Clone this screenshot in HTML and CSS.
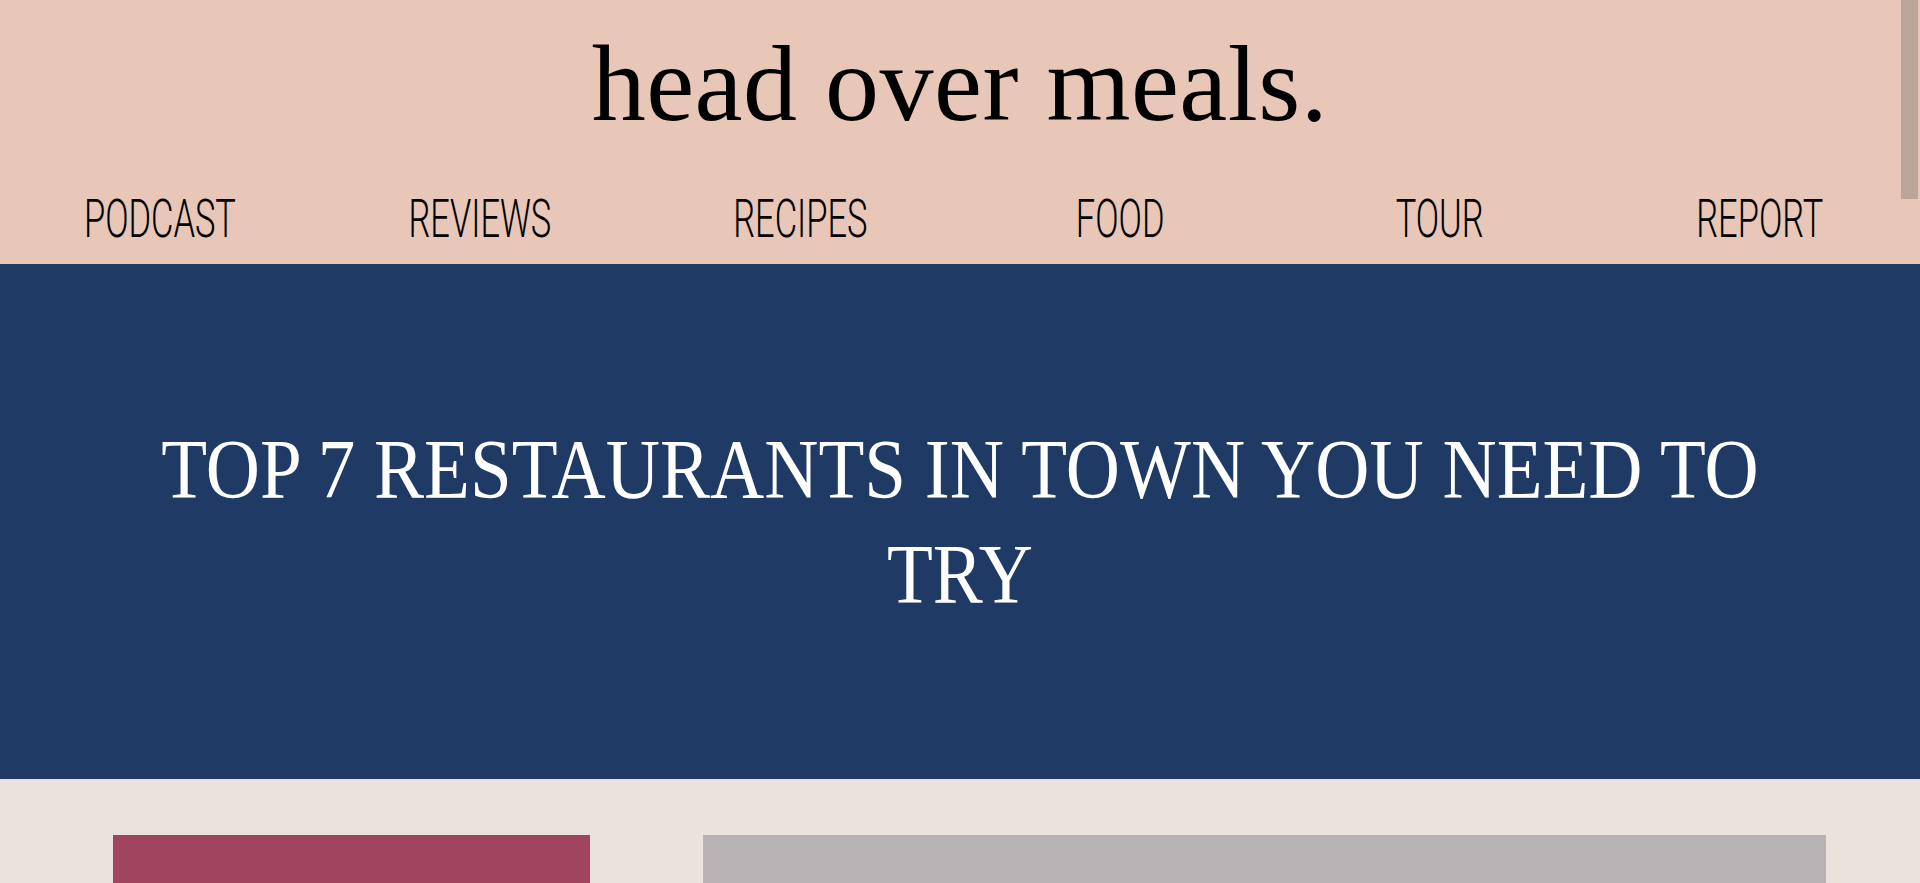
FILE: index.html
```html
<!DOCTYPE html>
<html lang="en">
<head>
<meta charset="utf-8">
<title>head over meals.</title>
<link rel="stylesheet" href="styles.css">
</head>
<body>
<header class="site-header">
  <h1 class="brand">head over meals.</h1>
  <nav class="main-nav">
    <a class="nav-item" href="#"><span class="nav-label">PODCAST</span></a>
    <a class="nav-item" href="#"><span class="nav-label">REVIEWS</span></a>
    <a class="nav-item" href="#"><span class="nav-label">RECIPES</span></a>
    <a class="nav-item" href="#"><span class="nav-label">FOOD</span></a>
    <a class="nav-item" href="#"><span class="nav-label">TOUR</span></a>
    <a class="nav-item" href="#"><span class="nav-label">REPORT</span></a>
  </nav>
</header>
<section class="hero">
  <h2 class="hero-title">TOP 7 RESTAURANTS IN TOWN YOU NEED TO TRY</h2>
</section>
<main class="content">
  <div class="card card-accent"></div>
  <div class="card card-media"></div>
</main>
<div class="scroll-thumb"></div>
</body>
</html>
```

FILE: styles.css
```css
html, body {
  margin: 0;
  padding: 0;
  overflow: hidden;
  height: 883px;
}

body {
  background: #ebe2de;
  font-family: "Liberation Serif", serif;
}

.site-header {
  height: 264px;
  background: #e8c7b8;
  display: flex;
  flex-direction: column;
  align-items: center;
  box-sizing: border-box;
  padding-top: 30px;
}

.brand {
  margin: 0;
  font-family: "Liberation Serif", serif;
  font-weight: normal;
  font-size: 108px;
  line-height: 107px;
  color: #000;
  letter-spacing: 0.5px;
}

.main-nav {
  margin-top: 56px;
  width: 100%;
  display: grid;
  grid-template-columns: repeat(6, 1fr);
}

.nav-item {
  display: flex;
  justify-content: center;
  text-decoration: none;
  color: #000;
}

.nav-label {
  display: inline-block;
  font-family: Roboto, "Liberation Sans", sans-serif;
  font-weight: 300;
  font-size: 53px;
  line-height: 53px;
  transform: scaleX(0.65);
  transform-origin: center;
  white-space: nowrap;
}

.hero {
  height: 515px;
  background: #1f3a65;
  display: flex;
  align-items: center;
  justify-content: center;
}

.hero-title {
  margin: 0;
  width: 1860px;
  flex: none;
  text-align: center;
  font-family: "Liberation Serif", serif;
  font-weight: normal;
  font-size: 85px;
  line-height: 105px;
  color: #fff;
  transform: scaleX(0.883);
}

.content {
  display: grid;
  grid-template-columns: 477px 1123px;
  column-gap: 113px;
  padding: 56px 0 0 113px;
}

.card {
  height: 48px;
}

.card-accent {
  background: #a0445f;
}

.card-media {
  background: #b7b2b3;
}

.scroll-thumb {
  position: fixed;
  top: 0;
  right: 2px;
  width: 17px;
  height: 199px;
  background: #bba49a;
}
```
